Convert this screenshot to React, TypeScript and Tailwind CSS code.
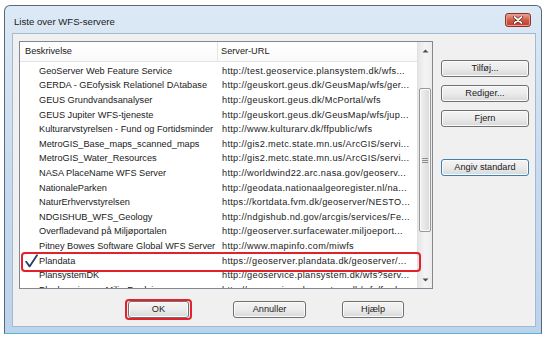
import React from 'react';

const servers: [string, string][] = [
  ['GeoServer Web Feature Service', 'http://test.geoservice.plansystem.dk/wfs...'],
  ['GERDA - GEofysisk Relationel DAtabase', 'http://geuskort.geus.dk/GeusMap/wfs/ger...'],
  ['GEUS Grundvandsanalyser', 'http://geuskort.geus.dk/McPortal/wfs'],
  ['GEUS Jupiter WFS-tjeneste', 'http://geuskort.geus.dk/GeusMap/wfs/jup...'],
  ['Kulturarvstyrelsen - Fund og Fortidsminder', 'http://www.kulturarv.dk/ffpublic/wfs'],
  ['MetroGIS_Base_maps_scanned_maps', 'http://gis2.metc.state.mn.us/ArcGIS/servi...'],
  ['MetroGIS_Water_Resources', 'http://gis2.metc.state.mn.us/ArcGIS/servi...'],
  ['NASA PlaceName WFS Server', 'http://worldwind22.arc.nasa.gov/geoserv...'],
  ['NationaleParken', 'http://geodata.nationaalgeoregister.nl/na...'],
  ['NaturErhvervstyrelsen', 'https://kortdata.fvm.dk/geoserver/NESTO...'],
  ['NDGISHUB_WFS_Geology', 'http://ndgishub.nd.gov/arcgis/services/Fe...'],
  ['Overfladevand på Miljøportalen', 'http://geoserver.surfacewater.miljoeport...'],
  ['Pitney Bowes Software Global WFS Server', 'http://www.mapinfo.com/miwfs'],
  ['Plandata', 'https://geoserver.plandata.dk/geoserver/...'],
  ['PlansystemDK', 'http://geoservice.plansystem.dk/wfs?serv...'],
  ['Planlægning og Miljø Fredninger', 'http://geoservice.plansystem.dk/wfs/fred...'],
];

const Btn = ({ label, className = '' }: { label: string; className?: string }) => (
  <div
    className={`h-[17px] flex items-center justify-center rounded-[3px] border border-[#707070] bg-linear-to-b from-[#f4f4f4] via-[#ebebeb] to-[#d8d8d8] shadow-[inset_0_0_0_1px_#fbfbfb] text-[9.2px] text-[#1a1a1a] ${className}`}
  >
    {label}
  </div>
);

const Arrow = ({ up }: { up?: boolean }) => (
  <svg width="7" height="4" viewBox="0 0 7 4">
    <path d={up ? 'M0.5 3.5 L3.5 0.5 L6.5 3.5 Z' : 'M0.5 0.5 L3.5 3.5 L6.5 0.5 Z'} fill="#4d4d4d" />
  </svg>
);

export default function App() {
  return (
    <div className="w-[546px] h-[341px] bg-white pt-[5px] pl-[4px] font-['Liberation_Sans',Arial,sans-serif] text-[#1a1a1a]">
      <div className="relative w-[538px] h-[329px] rounded-t-[6px] border border-[#59687a] border-b-[#58b2d8] bg-linear-to-b from-[#dce9f6] via-[#c8dbef] to-[#bcd3ec]">
        {/* title bar */}
        <div className="h-[27px] flex items-center pl-[9px] pt-[5px] text-[9.6px]">Liste over WFS-servere</div>
        <div className="absolute right-[10px] top-[7px] w-[26px] h-[14px] rounded-[3px] border border-[#8a3325] bg-linear-to-b from-[#e8a79c] via-[#cf5a47] to-[#c0402b] flex items-center justify-center shadow-[inset_0_0_0_1px_#eb9a8c]">
          <svg width="10" height="8" viewBox="0 0 10 8">
            <path d="M1.5 1 L8.5 7 M8.5 1 L1.5 7" stroke="#5a1a10" strokeWidth="3" strokeLinecap="round" />
            <path d="M1.5 1 L8.5 7 M8.5 1 L1.5 7" stroke="#ffffff" strokeWidth="1.7" strokeLinecap="round" />
          </svg>
        </div>

        {/* client area */}
        <div className="ml-[7px] w-[524px] h-[294px] border border-[#a4b8cf] bg-[#f0f0f0] pl-[6px] pt-[7px] flex flex-col">
          <div className="flex">
            {/* list view */}
            <div className="relative w-[414px] h-[248px] border border-[#828790] bg-white flex">
              <div className="flex-1 flex flex-col overflow-hidden">
                <div className="h-[20px] shrink-0 flex border-b border-[#e5e5e5] bg-linear-to-b from-white to-[#fafafa] text-[9.2px]">
                  <div className="w-[198px] pl-[5px] flex items-center border-r border-[#e5e5e5]">Beskrivelse</div>
                  <div className="pl-[3px] flex items-center">Server-URL</div>
                </div>
                <div className="pt-[2.5px]">
                  {servers.map(([name, url]) => (
                    <div key={name} className="h-[14.6px] flex items-center text-[9.2px] whitespace-nowrap">
                      <div className="w-[198px] shrink-0 pl-[19px] overflow-hidden">{name}</div>
                      <div className="pl-[4px] overflow-hidden tracking-[0.3px]">{url}</div>
                    </div>
                  ))}
                </div>
              </div>

              {/* vertical scrollbar */}
              <div className="w-[15px] flex flex-col bg-linear-to-r from-[#e6e6e6] via-[#f4f4f4] to-[#ededed] border-l border-[#e0e0e0]">
                <div className="h-[17px] flex items-center justify-center">
                  <Arrow up />
                </div>
                <div className="flex-1 pt-[29px] px-[1px]">
                  <div className="h-[144px] rounded-[2px] border border-[#979797] bg-linear-to-r from-[#f2f2f2] to-[#d9d9d9] shadow-[inset_0_0_0_1px_#fafafa] flex flex-col items-center justify-center gap-[1px]">
                    <div className="w-[6px] h-[1px] bg-[#8c8c8c]" />
                    <div className="w-[6px] h-[1px] bg-[#8c8c8c]" />
                    <div className="w-[6px] h-[1px] bg-[#8c8c8c]" />
                  </div>
                </div>
                <div className="h-[17px] flex items-center justify-center">
                  <Arrow />
                </div>
              </div>

              {/* highlighted row */}
              <div className="absolute left-[1px] top-[210px] w-[400px] h-[20px] rounded-[4px] border-2 border-[#e3202b]" />
              <svg className="absolute left-[5px] top-[212px]" width="13" height="14" viewBox="0 0 13 14">
                <path d="M1.2 7.8 L4.6 12.4 L12 1.2" fill="none" stroke="#1f3d6e" strokeWidth="1.8" strokeLinecap="round" strokeLinejoin="round" />
              </svg>
            </div>

            {/* side buttons */}
            <div className="ml-[8px] mt-[19px] w-[88px] flex flex-col gap-[8px]">
              <Btn label="Tilføj..." />
              <Btn label="Rediger..." />
              <Btn label="Fjern" />
              <Btn
                label="Angiv standard"
                className="mt-[24px] !border-[#3c7fb1] shadow-[inset_0_0_0_1px_#bfe1f6]"
              />
            </div>
          </div>

          {/* bottom buttons */}
          <div className="flex mt-[12px]">
            <div className="relative ml-[109px] w-[61px]">
              <Btn label="OK" />
              <div className="absolute -left-[3px] -right-[3px] -top-[2px] -bottom-[2px] rounded-[4px] border-2 border-[#e3202b]" />
            </div>
            <Btn label="Annuller" className="ml-[44px] w-[73px]" />
            <Btn label="Hjælp" className="ml-[36px] w-[62px]" />
          </div>
        </div>
      </div>
    </div>
  );
}
